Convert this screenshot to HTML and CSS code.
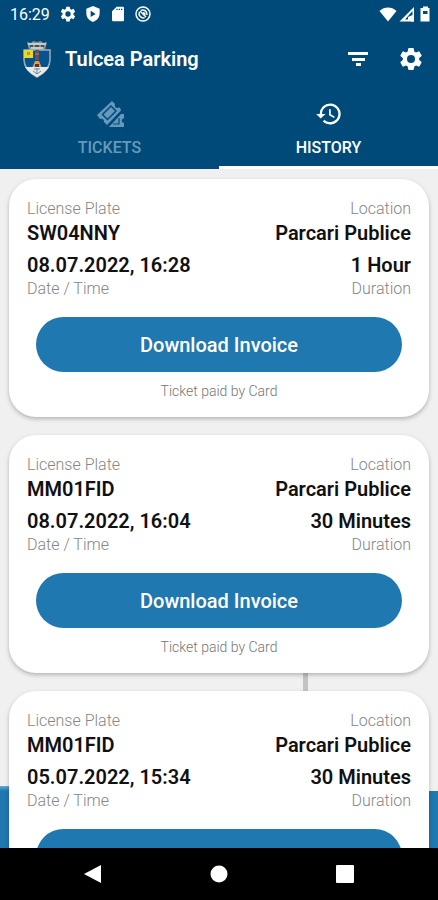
FILE: index.html
```html
<!DOCTYPE html>
<html lang="en">
<head>
  <meta charset="UTF-8" />
  <meta name="viewport" content="width=device-width, initial-scale=1.0" />
  <title>Tulcea Parking</title>
  <link rel="stylesheet" href="styles.css">
</head>
<body>
  <header>
    <div class="status-bar">
      <span class="clock">16:29</span>
      <svg class="status-icon" viewBox="0 0 24 24"><path fill-rule="evenodd" d="M9.500 1h5l.6 3.300 2 1.200 3.200-1.200 2.400 4.200-2.500 2.200v2.600l2.500 2.200-2.400 4.200-3.200-1.200-2 1.200-.6 3.500h-5l-.6-3.500-2-1.200-3.200 1.200-2.400-4.200 2.500-2.200v-2.600L1.300 8.500l2.400-4.200 3.200 1.200 2-1.200zM12 8a4 4 0 1 0 0 8 4 4 0 0 0 0-8z"/></svg>
      <svg class="status-icon" viewBox="0 0 24 24"><path fill-rule="evenodd" d="M12 0l10 4v7c0 6-4 11-10 13C6 22 2 17 2 11V4zM8.500 7v9.500L16 12z"/></svg>
      <svg class="status-icon" viewBox="0 0 24 24"><path fill-rule="evenodd" d="M10 1h9a2 2 0 0 1 2 2v18a2 2 0 0 1-2 2H5a2 2 0 0 1-2-2V8zM9.500 4v2h2V4zm3.500 0v2h2V4zm3.500 0v2h2V4z"/></svg>
      <svg class="status-icon" viewBox="0 0 24 24"><g fill="none" stroke="#fff" stroke-width="2.200"><circle cx="12" cy="12" r="10.500"/><path d="M7.500 7.500l9 9M9 6.500a6.500 6.500 0 0 1 9 7M6.500 9a6.500 6.500 0 0 0 8 8.500M12 10a3 3 0 0 1 3 3"/></g></svg>
      <span class="spacer"></span>
      <div class="signal">
        <svg width="18" height="16" viewBox="0 0 18 16"><path d="M9 15.500L.5 5C3 2.500 6 1.500 9 1.500s6 1 8.500 3.500z"/></svg>
        <svg width="16" height="16" viewBox="0 0 16 16"><path fill-rule="evenodd" d="M15 1v14.500H.5zM13.500 5L6 13.500h3V11l4.500-2z"/><path d="M10 12l2.500-2H15v5.500h-3z"/></svg>
        <svg width="16" height="16" viewBox="0 0 16 16"><path fill-rule="evenodd" d="M6 .5h5V2h1.500v13.500h-9V2H6zM6 5v3h4.500V5z"/></svg>
      </div>
    </div>

    <div class="app-bar">
      <svg class="crest" width="28" height="38" viewBox="0 0 28 38">
        <path fill="#87949b" d="M4 2l4 1 2-2 4 1 4-1 2 2 4-1-2 8H6z"/>
        <path fill="#c8cbc8" d="M5 3h18v2H5zM8 7h12v2H8z"/>
        <path fill="#43545e" d="M7 5h3v2H7zm5 0h4v2h-4zm6 0h3v2h-3z"/>
        <path fill="#075390" stroke="#a2aeb4" stroke-width="1.500" d="M1 10h26v10c0 8-6 13-13 17C7 33 1 28 1 20z"/>
        <path fill="#ead832" d="M1 10h9v8H1z"/>
        <path fill="#b2a12c" d="M4 12h3v3H4z"/>
        <path fill="#60506a" d="M12 10h4v10h-4z"/>
        <path fill="#bd5c3c" d="M12 13h4v2h-4z"/>
        <path fill="#e49b44" d="M12 21h4l3 7H9z"/>
        <path fill="#4c3938" d="M12 24h4v4h-4z"/>
        <path fill="#e5eaec" d="M2 27h24c-3 5-8 8-12 10-4-2-9-5-12-10z"/>
        <path fill="none" stroke="#718696" d="M14 28v6M10 31l4 3 4-3M11 29h6"/>
      </svg>
      <h1>Tulcea Parking</h1>
      <button class="icon-button" type="button" aria-label="Filter">
        <svg width="22" height="16" viewBox="0 0 22 16"><path d="M1 1h20v3H1zM5 7h13v3H5zM9 12h5v3H9z"/></svg>
      </button>
      <button class="icon-button" type="button" aria-label="Settings">
        <svg width="24" height="24" viewBox="0 0 24 24"><path fill-rule="evenodd" d="M10 1h4q.7 0 .8.800l.5 2.600 1.700 1 2.500-1q.7-.3 1 .4l2 3.400q.4.600-.2 1.100l-2.100 1.700v2l2.100 1.700q.6.500.2 1.100l-2 3.400q-.3.700-1 .4l-2.500-1-1.700 1-.5 2.600q-.1.800-.8.800h-4q-.7 0-.8-.8l-.5-2.600-1.700-1-2.500 1q-.7.300-1-.4l-2-3.400q-.4-.6.200-1.100L3.800 13v-2L1.700 9.300q-.6-.5-.2-1.100l2-3.400q.3-.7 1-.4l2.500 1 1.700-1 .5-2.600Q9.300 1 10 1zM12 8a4 4 0 1 0 0 8 4 4 0 0 0 0-8z"/></svg>
      </button>
    </div>

    <nav class="tabs">
      <a class="tab" href="#tickets">
        <svg width="28" height="28" viewBox="0 0 28 28">
          <path d="M16 1l3 3q-1 3 2 4l3-.5 1 3L11 25l-3-3q0-4-4-3l-3-4z"/>
          <path fill="none" stroke="#004a7a" stroke-width="1.500" d="M15 6l5 5-8.500 8.500-5-5z"/>
          <path d="M25 14h3v4q-3 1-2 4l2 1v4H13z"/>
          <path fill="none" stroke="#004a7a" stroke-width="1.200" d="M23 18v6h-6"/>
        </svg>
        TICKETS
      </a>
      <a class="tab active" href="#history" aria-current="page">
        <svg width="28" height="28" viewBox="0 0 24 24"><path d="M13 3a9 9 0 0 0-9 9H1l3.900 3.900L9 12H6a7 7 0 1 1 2.100 4.900l-1.400 1.500A9 9 0 1 0 13 3zm-1 5v5l4.300 2.500.7-1.200-3.500-2.100V8z"/></svg>
        HISTORY
      </a>
    </nav>
  </header>

  <main>
    <article class="card">
      <div class="details">
        <div class="info">
          <span class="label">License Plate</span>
          <strong>SW04NNY</strong>
        </div>
        <div class="info right">
          <span class="label">Location</span>
          <strong>Parcari Publice</strong>
        </div>
        <div class="info">
          <strong>08.07.2022, 16:28</strong>
          <span class="label">Date / Time</span>
        </div>
        <div class="info right">
          <strong>1 Hour</strong>
          <span class="label">Duration</span>
        </div>
      </div>
      <button class="download" type="button">Download Invoice</button>
      <p class="paid">Ticket paid by Card</p>
    </article>

    <article class="card">
      <div class="details">
        <div class="info">
          <span class="label">License Plate</span>
          <strong>MM01FID</strong>
        </div>
        <div class="info right">
          <span class="label">Location</span>
          <strong>Parcari Publice</strong>
        </div>
        <div class="info">
          <strong>08.07.2022, 16:04</strong>
          <span class="label">Date / Time</span>
        </div>
        <div class="info right">
          <strong>30 Minutes</strong>
          <span class="label">Duration</span>
        </div>
      </div>
      <button class="download" type="button">Download Invoice</button>
      <p class="paid">Ticket paid by Card</p>
    </article>

    <article class="card">
      <div class="details">
        <div class="info">
          <span class="label">License Plate</span>
          <strong>MM01FID</strong>
        </div>
        <div class="info right">
          <span class="label">Location</span>
          <strong>Parcari Publice</strong>
        </div>
        <div class="info">
          <strong>05.07.2022, 15:34</strong>
          <span class="label">Date / Time</span>
        </div>
        <div class="info right">
          <strong>30 Minutes</strong>
          <span class="label">Duration</span>
        </div>
      </div>
      <button class="download" type="button">Download Invoice</button>
      <p class="paid">Ticket paid by Card</p>
    </article>
  </main>

  <footer class="system-nav">
    <button type="button" aria-label="Back"><svg width="18" height="18" viewBox="0 0 18 18"><path d="M17 0v18L0 9z"/></svg></button>
    <button type="button" aria-label="Home"><svg width="18" height="18" viewBox="0 0 18 18"><circle cx="9" cy="9" r="8.500"/></svg></button>
    <button type="button" aria-label="Recent apps"><svg width="18" height="18" viewBox="0 0 18 18"><rect width="18" height="18" rx="1"/></svg></button>
  </footer>
</body>
</html>
```
FILE: styles.css
```css
* {
  box-sizing: border-box;
}
body {
  font-family: Roboto, "Liberation Sans", sans-serif;
  margin: 0;
  height: 100vh;
  display: flex;
  flex-direction: column;
  background: #f0f0f0;
}
svg {
  display: block;
  fill: white;
}
button {
  border: none;
  padding: 0;
  font-family: inherit;
  cursor: pointer;
}
header {
  background-color: #004a7a;
  color: white;
  flex-shrink: 0;
}
.status-bar {
  height: 28px;
  padding: 0 5px 0 10px;
  display: flex;
  align-items: center;
  gap: 9px;
}
.clock {
  font-size: 16px;
  margin-right: 1px;
}
.status-icon {
  width: 16px;
  height: 16px;
}
.spacer {
  flex: 1;
}
.signal {
  display: flex;
  gap: 2px;
}
.app-bar {
  height: 62px;
  padding: 0 15px 0 23px;
  display: flex;
  align-items: center;
}
.app-bar h1 {
  flex: 1;
  margin: 0 0 0 14px;
  font-size: 20px;
  font-weight: 600;
}
.icon-button {
  background: none;
  margin-left: 30px;
}
.tabs {
  display: flex;
}
.tab {
  flex: 1;
  height: 79px;
  padding-top: 10px;
  display: flex;
  flex-direction: column;
  align-items: center;
  gap: 10px;
  border-bottom: 3px solid transparent;
  color: #669abd;
  font-size: 16px;
  line-height: 20px;
  font-weight: 500;
  text-decoration: none;
}
.tab svg {
  fill: #669abd;
}
.tab.active {
  color: white;
  border-bottom-color: white;
}
.tab.active svg {
  fill: white;
}
main {
  flex: 1;
  min-height: 0;
  overflow-y: auto;
  scrollbar-width: none;
  padding: 10px 9px;
  display: flex;
  flex-direction: column;
  gap: 18px;
  /* lamp post and river of the city backdrop, seen between the cards */
  background:
    linear-gradient(#c4c4c4, #c4c4c4) 70% 495px / 5px 40px no-repeat,
    linear-gradient(#67aad4, #1f78b0 5px) 0 100% / 9px 62px no-repeat,
    linear-gradient(#1f78b0, #1f78b0) 0 100% / 100% 57px no-repeat,
    #f0f0f0;
}
.card {
  flex-shrink: 0;
  padding: 20px 18px 17px;
  background: white;
  border-radius: 27px;
  box-shadow: 0 2px 4px rgba(0, 0, 0, 0.25);
}
.details {
  display: grid;
  grid-template-columns: auto auto;
  justify-content: space-between;
  row-gap: 4px;
}
.info {
  display: flex;
  flex-direction: column;
}
.right {
  text-align: right;
}
.label {
  color: #858585;
  font-size: 16px;
  line-height: 20px;
  font-weight: 300;
}
.info strong {
  color: #111;
  font-size: 20px;
  line-height: 28px;
  font-weight: 600;
}
.download {
  display: block;
  width: calc(100% - 18px);
  height: 55px;
  margin: 18px auto 10px;
  border-radius: 28px;
  background-color: #1f78b0;
  color: white;
  font-size: 20px;
  font-weight: 500;
}
.paid {
  margin: 0;
  color: #757575;
  font-size: 14px;
  line-height: 18px;
  font-weight: 300;
  text-align: center;
}
.system-nav {
  height: 52px;
  flex-shrink: 0;
  background: black;
  display: flex;
  align-items: center;
  justify-content: center;
  gap: 108px;
}
.system-nav button {
  background: none;
}
```
